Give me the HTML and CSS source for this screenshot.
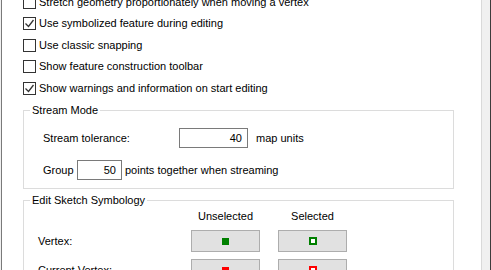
FILE: index.html
```html
<!DOCTYPE html>
<html lang="en">
<head>
<meta charset="utf-8">
<title>Editing Options</title>
<link rel="stylesheet" href="styles.css">
</head>
<body>
<div class="window">
  <div class="page">
    <div class="options">
      <div class="opt"><span class="cb"></span><span class="opt-text">Stretch geometry proportionately when moving a vertex</span></div>
      <div class="opt"><span class="cb"><svg class="tick" viewBox="0 0 11 11"><path d="M1.5 5.5 L4.5 8.5 L9.5 2"/></svg></span><span class="opt-text">Use symbolized feature during editing</span></div>
      <div class="opt"><span class="cb"></span><span class="opt-text">Use classic snapping</span></div>
      <div class="opt"><span class="cb"></span><span class="opt-text">Show feature construction toolbar</span></div>
      <div class="opt"><span class="cb"><svg class="tick" viewBox="0 0 11 11"><path d="M1.5 5.5 L4.5 8.5 L9.5 2"/></svg></span><span class="opt-text">Show warnings and information on start editing</span></div>
    </div>

    <fieldset class="group stream">
      <legend>Stream Mode</legend>
      <div class="stream-body">
        <div class="field-row">
          <span class="lbl-tol">Stream tolerance:</span>
          <span class="num num-wide">40</span>
          <span class="after-wide">map units</span>
        </div>
        <div class="field-row">
          <span class="lbl-group">Group</span>
          <span class="num num-narrow">50</span>
          <span class="after-narrow">points together when streaming</span>
        </div>
      </div>
    </fieldset>

    <fieldset class="group sketch">
      <legend>Edit Sketch Symbology</legend>
      <div class="sym-grid">
        <span></span>
        <span class="colhead">Unselected</span>
        <span class="colhead">Selected</span>

        <span class="rowlbl">Vertex:</span>
        <span class="swatch"><span class="mark fill green"></span></span>
        <span class="swatch"><span class="mark ring green"></span></span>

        <span class="rowlbl">Current Vertex:</span>
        <span class="swatch"><span class="mark fill red"></span></span>
        <span class="swatch"><span class="mark ring red"></span></span>
      </div>
    </fieldset>
  </div>
  <div class="gutter"></div>
  <div class="edge"></div>
</div>
</body>
</html>
```

FILE: styles.css
```css
html, body {
  margin: 0;
  padding: 0;
}

body {
  background: #f0f0f0;
  height: 270px;
  overflow: hidden;
  font-family: "Liberation Sans", "Noto Sans", sans-serif;
  font-size: 11px;
  color: #000;
}

.window {
  display: flex;
  height: 270px;
  padding-left: 1px;
}

.page {
  width: 481px;
  flex: none;
  box-sizing: border-box;
  background: #fff;
  border-left: 1px solid #7a7a7a;
  border-right: 1px solid #d9d9d9;
  padding-left: 21px;
  overflow: hidden;
}

.gutter {
  width: 8px;
  flex: none;
}

.edge {
  width: 1px;
  flex: none;
  background: #3c3c3c;
}

/* checkbox list */
.options {
  display: flex;
  flex-direction: column;
  gap: 8.5px;
  margin-top: -4.5px;
}

.opt {
  display: flex;
  align-items: center;
  height: 13px;
  gap: 3px;
  white-space: nowrap;
}

.cb {
  width: 13px;
  height: 13px;
  flex: none;
  box-sizing: border-box;
  border: 1px solid #333;
  background: #fff;
  display: flex;
}

.tick {
  width: 11px;
  height: 11px;
  fill: none;
  stroke: #333;
  stroke-width: 1.3;
}

.opt-text {
  line-height: 13px;
}

/* group boxes */
.group {
  width: 431px;
  box-sizing: border-box;
  min-width: 0;
  margin: 0;
  padding: 0;
  border: 1px solid #dcdcdc;
}

.group legend {
  padding: 0 2px;
  margin-left: 6px;
  line-height: 14px;
}

.stream {
  margin-top: 8.5px;
}

.stream-body {
  display: flex;
  flex-direction: column;
  gap: 12px;
  padding: 11px 0 8px 19px;
}

.field-row {
  display: flex;
  align-items: center;
  height: 20px;
}

.lbl-tol {
  width: 136px;
  flex: none;
}

.lbl-group {
  width: 34px;
  flex: none;
}

.num {
  height: 20px;
  box-sizing: border-box;
  border: 1px solid #7a7a7a;
  background: #fff;
  text-align: right;
  padding-right: 5px;
  line-height: 18px;
  flex: none;
}

.num-wide {
  width: 69px;
}

.num-narrow {
  width: 45px;
}

.after-wide {
  margin-left: 8px;
}

.after-narrow {
  margin-left: 3px;
}

.sketch {
  margin-top: 4px;
}

.sym-grid {
  display: grid;
  grid-template-columns: 135px 69px 69px;
  grid-template-rows: 14px;
  grid-auto-rows: 22px;
  column-gap: 18px;
  row-gap: 7px;
  padding: 2px 0 8px 14px;
  align-items: center;
}

.colhead {
  text-align: center;
  line-height: 14px;
}

.rowlbl {
  line-height: 14px;
}

.swatch {
  height: 22px;
  box-sizing: border-box;
  border: 1px solid #adadad;
  background: #e1e1e1;
  display: flex;
  align-items: center;
  justify-content: center;
}

.mark {
  box-sizing: border-box;
}

.fill {
  width: 7px;
  height: 7px;
}

.ring {
  width: 8px;
  height: 8px;
  border: 2px solid;
  background: #fff;
}

.fill.green { background: #008000; }
.ring.green { border-color: #008000; }
.fill.red { background: #ff0000; }
.ring.red { border-color: #ff0000; }
```
